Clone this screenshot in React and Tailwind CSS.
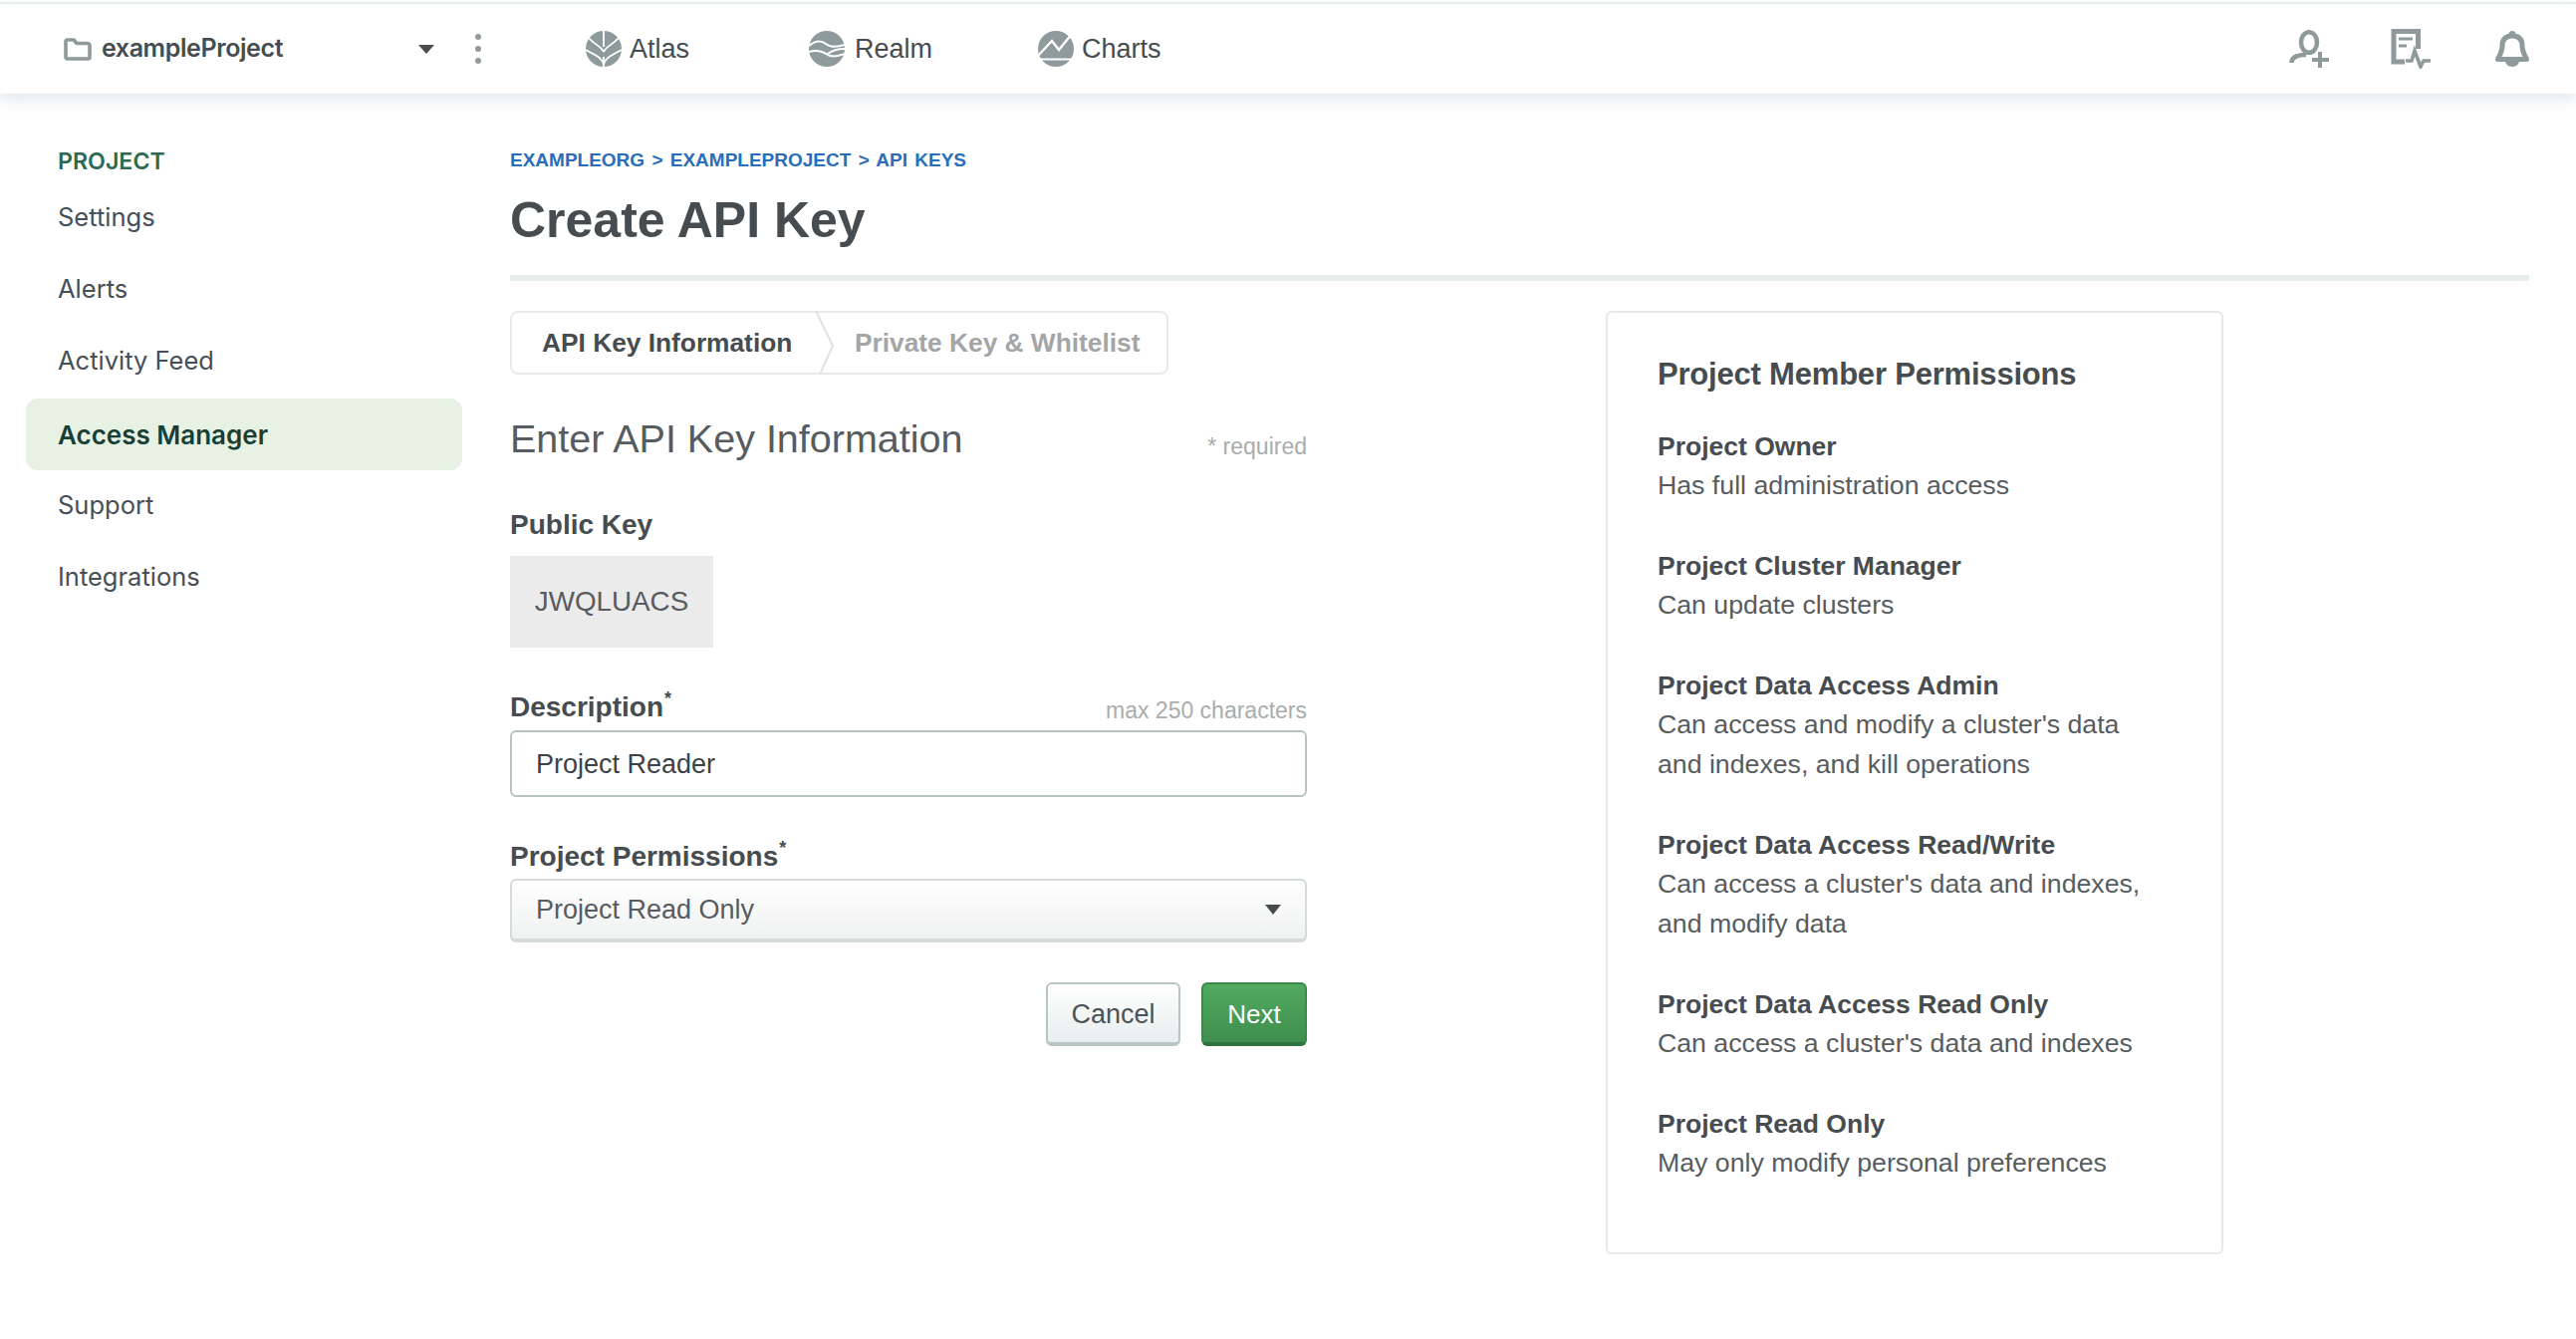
const F = "font-['Liberation_Sans',Arial,sans-serif]";

const Folder = () => (
  <svg width="28" height="23" viewBox="0 0 28 23" fill="none" className="shrink-0">
    <path d="M2 6V3.500C2 2.700 2.700 2 3.500 2H10l3 3.500h11c.8 0 2 .7 2 2V19.500c0 .8-.7 1.500-1.500 1.500h-21C2.700 21 2 20.300 2 19.500V6z" stroke="#8f9a9c" strokeWidth="3.6" strokeLinejoin="round" />
  </svg>
);

const AtlasIcon = () => (
  <svg width="36" height="36" viewBox="0 0 36 36" className="shrink-0">
    <ellipse cx="18" cy="18" rx="18" ry="18" fill="#8f9a9c" />
    <g stroke="#fff" strokeWidth="1.800" fill="none">
      <path d="M18 0V16" />
      <path d="M18 36V26" />
      <path d="M18 21C15 15 9 14 3 7" />
      <path d="M18 21C21 15 27 14 33 7" />
      <path d="M18 34C17 27 9 24 0 19" />
      <path d="M18 34C19 27 27 24 36 19" />
    </g>
  </svg>
);

const RealmIcon = () => (
  <svg width="36" height="36" viewBox="0 0 36 36" className="shrink-0">
    <ellipse cx="18" cy="18" rx="18" ry="18" fill="#8f9a9c" />
    <g stroke="#fff" strokeWidth="2" fill="none">
      <path d="M0 15C6 10 12 9 17 13C22 17 30 16 36 14" />
      <path d="M0 21C7 19 13 20 19 24C25 27 31 25 36 23" />
      <path d="M19 23C24 19 30 18 36 18" />
    </g>
  </svg>
);

const ChartsIcon = () => (
  <svg width="36" height="36" viewBox="0 0 36 36" className="shrink-0">
    <ellipse cx="18" cy="18" rx="18" ry="18" fill="#8f9a9c" />
    <g stroke="#fff" fill="none">
      <path d="M0 25L14 10L21 19L34 3" strokeWidth="2.400" />
      <path d="M0 28.500H36" strokeWidth="2.200" />
    </g>
  </svg>
);

const UserPlus = () => (
  <svg width="40" height="38" viewBox="0 0 40 38" fill="none" stroke="#8f9a9c" strokeWidth="4.500" className="shrink-0">
    <ellipse cx="20" cy="12.500" rx="8" ry="10.300" />
    <path d="M2.500 33C2.500 27 8 25 17 25" />
    <path d="M31 22V38M23 30H40" strokeWidth="4" />
  </svg>
);

const DocPulse = () => (
  <svg width="40" height="40" viewBox="0 0 40 40" fill="none" className="shrink-0">
    <path d="M14 33H3V2.500H27.500V20" stroke="#8f9a9c" strokeWidth="5" />
    <path d="M8 10H22M8 17H16" stroke="#8f9a9c" strokeWidth="3" />
    <path d="M15 32H21L24 22L30 38L33 32H40" stroke="#8f9a9c" strokeWidth="3.600" />
  </svg>
);

const Bell = () => (
  <svg width="34" height="36" viewBox="0 0 34 36" className="shrink-0">
    <circle cx="17" cy="3.500" r="3.500" fill="#8f9a9c" />
    <path d="M17 5C10 5 7 9 7 15C7 21 4 25 2.500 28.500H31.500C30 25 27 21 27 15C27 9 24 5 17 5Z" fill="none" stroke="#8f9a9c" strokeWidth="5" strokeLinejoin="round" />
    <path d="M10 30C10 33 13 36 17 36C21 36 24 33 24 30Z" fill="#8f9a9c" />
  </svg>
);

const Caret = ({ color = "#464c4f", w = 16, h = 9 }) => (
  <svg width={w} height={h} viewBox="0 0 16 9" preserveAspectRatio="none" className="shrink-0">
    <path d="M0 0H16L8 9Z" fill={color} />
  </svg>
);

const NavProduct = ({ icon, label, className = "" }) => (
  <div className={`flex items-center gap-[8px] ${className}`}>
    {icon}
    <span className={`${F} text-[27px] text-[#464c4f]`}>{label}</span>
  </div>
);

const sideItems = ["Settings", "Alerts", "Activity Feed", "Access Manager", "Support", "Integrations"];

const perms = [
  ["Project Owner", ["Has full administration access"]],
  ["Project Cluster Manager", ["Can update clusters"]],
  ["Project Data Access Admin", ["Can access and modify a cluster's data", "and indexes, and kill operations"]],
  ["Project Data Access Read/Write", ["Can access a cluster's data and indexes,", "and modify data"]],
  ["Project Data Access Read Only", ["Can access a cluster's data and indexes"]],
  ["Project Read Only", ["May only modify personal preferences"]],
];

const Req = () => <sup className="text-[18px] font-bold ml-[1px] top-[-12px]">*</sup>;

export default function App() {
  return (
    <div className={`min-h-screen bg-white ${F} text-[#464c4f]`}>
      {/* top nav */}
      <div className="pt-[2px]">
        <div className="relative z-10 flex h-[92px] items-center border-t-2 border-[#e7eeec] bg-white shadow-[0_6px_14px_rgba(170,190,205,0.35)]">
          <div className="ml-[64px] flex w-[372px] items-center gap-[10px]">
            <Folder />
            <span className="font-['Inter',sans-serif] text-[25px] font-semibold tracking-[-0.4px] text-[#464c4f]">exampleProject</span>
            <div className="ml-auto"><Caret w={16} h={9} /></div>
          </div>
          <div className="ml-[41px] flex w-[6px] flex-col gap-[6px]">
            <span className="h-[6px] w-[6px] rounded-full bg-[#8f9a9c]" />
            <span className="h-[6px] w-[6px] rounded-full bg-[#8f9a9c]" />
            <span className="h-[6px] w-[6px] rounded-full bg-[#8f9a9c]" />
          </div>
          <NavProduct icon={<AtlasIcon />} label="Atlas" className="ml-[105px] w-[224px]" />
          <NavProduct icon={<RealmIcon />} label="Realm" className="w-[230px] gap-[10px]" />
          <NavProduct icon={<ChartsIcon />} label="Charts" />
          <div className="ml-auto mr-[47px] flex items-center">
            <UserPlus />
            <div className="ml-[62px]"><DocPulse /></div>
            <div className="ml-[65px]"><Bell /></div>
          </div>
        </div>
      </div>

      <div className="flex">
        {/* sidebar */}
        <aside className="w-[512px] shrink-0 pl-[26px] pt-[56px] font-['Inter',sans-serif]">
          <div className="mb-[8px] pl-[32px] text-[23.200px] font-semibold leading-[24px] text-[#2d6a4f]">PROJECT</div>
          {sideItems.map((item) =>
            item === "Access Manager" ? (
              <div key={item} className="mt-[2px] -mb-[1px] flex h-[72px] w-[438px] items-center rounded-[12px] bg-[#e7f2e5] pl-[32px] text-[26px] font-semibold text-[#163f35]">
                {item}
              </div>
            ) : (
              <div key={item} className="flex h-[72px] w-[438px] items-center pl-[32px] text-[25.500px] text-[#464f57]">
                {item}
              </div>
            )
          )}
        </aside>

        {/* content */}
        <main className="min-w-0 flex-1 pr-[47px] pt-[55px]">
          <div className="text-[19px] font-bold leading-[24px] text-[#2a6ebb] [word-spacing:2px]">EXAMPLEORG &gt; EXAMPLEPROJECT &gt; API KEYS</div>
          <h1 className="mt-[18px] text-[50px] font-bold leading-[60px] text-[#464c4f]">Create API Key</h1>
          <div className="mt-[25px] h-[6px] bg-[#e7eeec]" />

          <div className="mt-[30px] flex items-start">
            {/* form column */}
            <div className="w-[800px] shrink-0">
              <div className="relative flex h-[64px] w-[661px] items-center rounded-[8px] border-2 border-[#e8eaea] pt-[2px] text-[26.300px] font-bold">
                <span className="pl-[30px] text-[#464c4f]">API Key Information</span>
                <span className="absolute left-[344px] text-[#a3a5a6]">Private Key &amp; Whitelist</span>
                <svg width="20" height="64" viewBox="0 0 20 64" fill="none" className="absolute left-[304px] top-[-2px]">
                  <path d="M1 0L18 35L5 64" stroke="#dfe3e3" strokeWidth="2" />
                </svg>
              </div>

              <div className="mt-[40px] flex items-end justify-between">
                <h2 className="text-[39.500px] font-normal leading-[48px] text-[#565c5f]">Enter API Key Information</h2>
                <span className="pb-[2px] text-[23px] leading-[28px] text-[#a9adad]">* required</span>
              </div>

              <label className="mt-[47px] block text-[28px] font-bold leading-[32px]">Public Key</label>
              <div className="mt-[15px] flex h-[92px] w-[204px] items-center justify-center bg-[#ebebeb] text-[27.800px] text-[#565c5f]">JWQLUACS</div>

              <div className="mt-[44px] flex items-end justify-between">
                <label className="text-[28px] font-bold leading-[32px]">Description<Req /></label>
                <span className="text-[23px] leading-[26px] text-[#a9adad]">max 250 characters</span>
              </div>
              <div className="mt-[7px] flex h-[67px] items-center rounded-[6px] border-2 border-[#b8c4c2] pl-[24px] pt-[2px] text-[27px] text-[#3d4245]">Project Reader</div>

              <label className="mt-[44px] block text-[28px] font-bold leading-[32px]">Project Permissions<Req /></label>
              <div className="mt-[6px] flex h-[64px] items-center justify-between rounded-[6px] border-2 border-b-4 border-[#d5dcda] bg-gradient-to-b from-white to-[#f0f1f1] pl-[24px] pr-[24px] text-[27px] text-[#565c5f]">
                <span>Project Read Only</span>
                <Caret w={16} h={10} color="#464c4f" />
              </div>

              <div className="mt-[40px] flex justify-end gap-[21px]">
                <button className="h-[64px] w-[135px] rounded-[6px] border-2 border-b-4 border-[#b8c6c3] bg-gradient-to-b from-white to-[#e9eded] pt-[2px] text-[27px] text-[#4b5357]">Cancel</button>
                <button className="h-[64px] w-[106px] rounded-[6px] border-2 border-b-4 border-[#3b8a4c] border-b-[#2f7340] bg-gradient-to-b from-[#52a95f] to-[#3f8f4e] pt-[2px] text-[26px] text-white">Next</button>
              </div>
            </div>

            {/* permissions card */}
            <div className="ml-[300px] h-[947px] w-[620px] shrink-0 rounded-[6px] border-2 border-[#e8e8e8] px-[50px] pt-[42px]">
              <h3 className="text-[31px] font-bold leading-[40px] tracking-[-0.2px] text-[#464c4f]">Project Member Permissions</h3>
              <div className="mt-[33px] flex flex-col gap-[42px]">
                {perms.map(([name, lines]) => (
                  <div key={name} className="text-[26.700px] leading-[40px]">
                    <div className="h-[38px] text-[26.500px] font-bold leading-[38px]">{name}</div>
                    {lines.map((l) => (
                      <div key={l} className="text-[#565c5f]">{l}</div>
                    ))}
                  </div>
                ))}
              </div>
            </div>
          </div>
        </main>
      </div>
    </div>
  );
}
